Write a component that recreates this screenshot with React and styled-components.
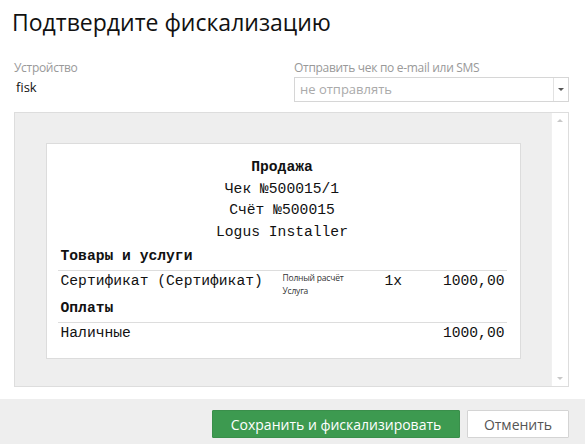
import React from 'react';
import styled, { createGlobalStyle } from 'styled-components';

const GlobalStyle = createGlobalStyle`
  html, body {
    margin: 0;
    padding: 0;
    background: #fff;
  }
  body {
    font-family: "Open Sans", "Noto Sans", sans-serif;
    color: #222;
  }
`;

const Dialog = styled.div`
  width: 585px;
  height: 444px;
  display: flex;
  flex-direction: column;
  background: #fff;
  overflow: hidden;
`;

const Body = styled.div`
  flex: 1;
  padding: 0 16px 0 14px;
`;

const Title = styled.h1`
  margin: 0 0 0 -2px;
  padding-top: 7px;
  font-family: "Open Sans", sans-serif;
  font-weight: 400;
  font-size: 23px;
  line-height: 30px;
  color: #111;
`;

const FieldRow = styled.div`
  display: grid;
  grid-template-columns: 280px 1fr;
  margin-top: 23px;
`;

const Field = styled.div`
  display: flex;
  flex-direction: column;
`;

const Label = styled.label`
  font-size: 12px;
  line-height: 16px;
  color: #999;
  letter-spacing: -0.3px;
`;

const Value = styled.div`
  font-size: 13px;
  line-height: 18px;
  margin-top: 2px;
  margin-left: 2px;
  color: #111;
`;

const Select = styled.div`
  margin-top: 1px;
  border: 1px solid #d6d6d6;
  display: flex;
  align-items: stretch;
  box-sizing: border-box;
  height: 25px;
`;

const SelectText = styled.div`
  flex: 1;
  padding-left: 5px;
  font-size: 13px;
  line-height: 23px;
  color: #aaa;
`;

const SelectArrow = styled.div`
  width: 14px;
  border-left: 1px solid #e2e2e2;
  display: flex;
  align-items: center;
  justify-content: center;
  &::after {
    content: '';
    border-left: 3px solid transparent;
    border-right: 3px solid transparent;
    border-top: 3px solid #555;
  }
`;

const Preview = styled.div`
  margin-top: 10px;
  height: 275px;
  box-sizing: border-box;
  border: 1px solid #ddd;
  background: #eee;
  display: flex;
`;

const PreviewArea = styled.div`
  flex: 1;
  display: flex;
  justify-content: center;
  align-items: flex-start;
  padding-top: 30px;
`;

const Scrollbar = styled.div`
  width: 17px;
  background: #fff;
  border-left: 1px solid #f0f0f0;
  display: flex;
  flex-direction: column;
  justify-content: space-between;
  align-items: center;
  padding: 6px 0;
  box-sizing: border-box;
`;

const ScrollArrow = styled.div`
  width: 0;
  height: 0;
  border-left: 3px solid transparent;
  border-right: 3px solid transparent;
  ${p => (p.$up ? 'border-bottom: 3px solid #c8c8c8;' : 'border-top: 3px solid #c8c8c8;')}
`;

const Receipt = styled.div`
  width: 475px;
  box-sizing: border-box;
  background: #fff;
  border: 1px solid #dcdcdc;
  padding: 13px 13px 15px 11px;
  font-family: "Liberation Mono", "Courier New", monospace;
  font-size: 14.67px;
  color: #111;
`;

const Center = styled.div`
  text-align: center;
  line-height: 21.5px;
  font-weight: ${p => (p.$bold ? 700 : 400)};
`;

const Section = styled.div`
  font-weight: 700;
  padding: ${p => p.$top}px 3px 3px;
  line-height: 21px;
  border-bottom: 1px solid #ddd;
`;

const ItemRow = styled.div`
  display: grid;
  grid-template-columns: 222px 92px 1fr 1fr;
  align-items: start;
  padding: 1px 2px 0 3px;
  line-height: 19px;
`;

const Note = styled.div`
  font-family: "Open Sans", sans-serif;
  font-size: 8.5px;
  line-height: 13px;
  color: #333;
  margin-top: -1px;
  letter-spacing: -0.2px;
`;

const Qty = styled.div`
  padding-left: 10px;
`;

const Amount = styled.div`
  text-align: right;
`;

const PayRow = styled.div`
  display: flex;
  justify-content: space-between;
  padding: 1px 2px 0 3px;
  line-height: 19px;
`;

const Footer = styled.div`
  height: 45px;
  box-sizing: border-box;
  background: #eee;
  display: flex;
  justify-content: flex-end;
  align-items: flex-start;
  gap: 7px;
  padding: 11px 16px 0 0;
  flex-shrink: 0;
`;

const Button = styled.button`
  height: 28px;
  padding: 0;
  font-family: "Open Sans", sans-serif;
  font-size: 14px;
  border: 1px solid ${p => (p.$primary ? '#3a8f4b' : '#d4d4d4')};
  background: ${p => (p.$primary ? '#3d9a50' : '#fff')};
  color: ${p => (p.$primary ? '#fff' : '#555')};
  border-radius: 1px;
  cursor: pointer;
  width: ${p => (p.$primary ? '248px' : '102px')};
`;

export default function App() {
  return (
    <>
      <GlobalStyle />
      <Dialog>
        <Body>
          <Title>Подтвердите фискализацию</Title>
          <FieldRow>
            <Field>
              <Label>Устройство</Label>
              <Value>fisk</Value>
            </Field>
            <Field>
              <Label>Отправить чек по e-mail или SMS</Label>
              <Select>
                <SelectText>не отправлять</SelectText>
                <SelectArrow />
              </Select>
            </Field>
          </FieldRow>
          <Preview>
            <PreviewArea>
              <Receipt>
                <Center $bold>Продажа</Center>
                <Center>Чек №500015/1</Center>
                <Center>Счёт №500015</Center>
                <Center>Logus Installer</Center>
                <Section $top={3}>Товары и услуги</Section>
                <ItemRow>
                  <div>Сертификат (Сертификат)</div>
                  <Note>
                    Полный расчёт
                    <br />
                    Услуга
                  </Note>
                  <Qty>1x</Qty>
                  <Amount>1000,00</Amount>
                </ItemRow>
                <Section $top={1}>Оплаты</Section>
                <PayRow>
                  <span>Наличные</span>
                  <span>1000,00</span>
                </PayRow>
              </Receipt>
            </PreviewArea>
            <Scrollbar>
              <ScrollArrow $up />
              <ScrollArrow />
            </Scrollbar>
          </Preview>
        </Body>
        <Footer>
          <Button $primary>Сохранить и фискализировать</Button>
          <Button>Отменить</Button>
        </Footer>
      </Dialog>
    </>
  );
}
